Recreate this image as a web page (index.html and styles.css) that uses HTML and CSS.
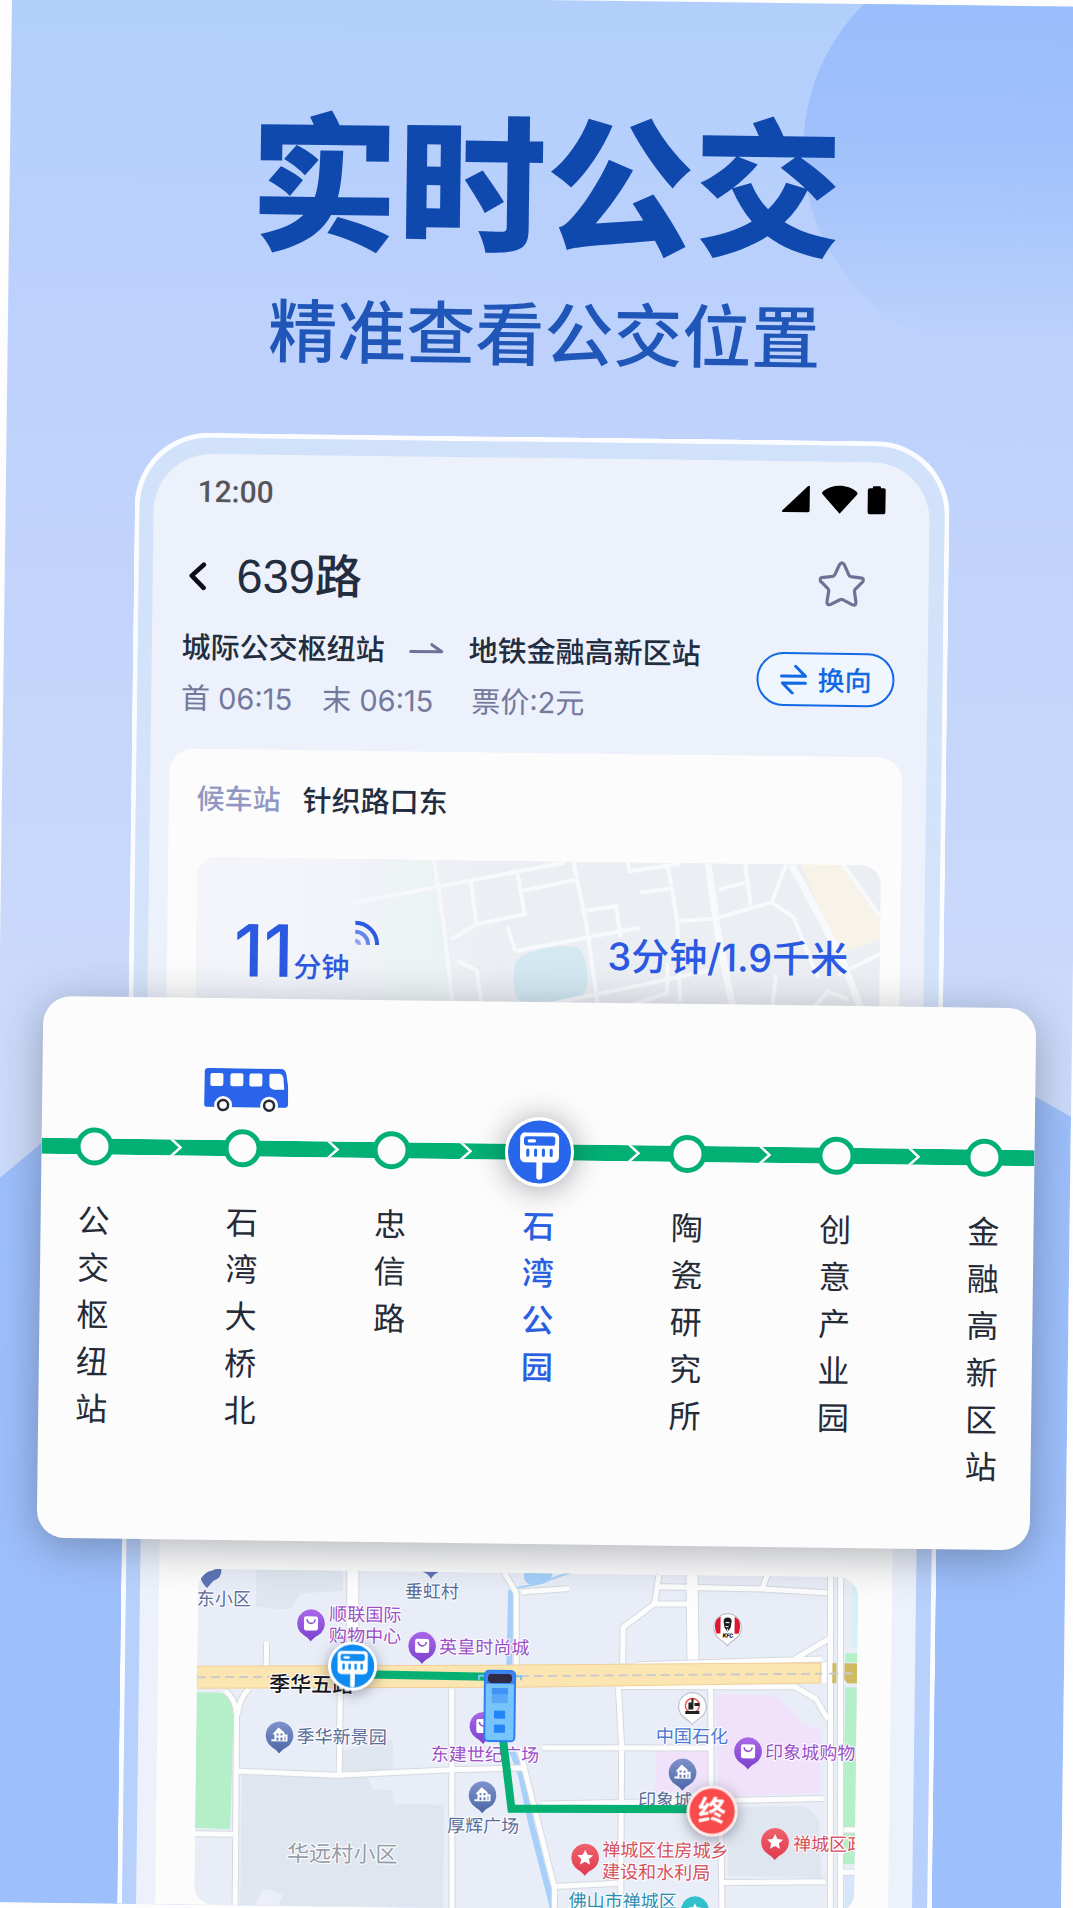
FILE: index.html
```html
<!DOCTYPE html>
<html lang="zh-CN">
<head>
<meta charset="utf-8">
<meta name="viewport" content="width=device-width, initial-scale=1">
<title>实时公交</title>
<link rel="stylesheet" href="styles.css">
</head>
<body>
<!-- shared symbols -->
<svg class="defs" width="0" height="0" aria-hidden="true">
  <defs>
    <linearGradient id="gp" x1="0" y1="0" x2="0" y2="1"><stop offset="0" stop-color="#a968ea"/><stop offset="1" stop-color="#7c40cc"/></linearGradient>
    <linearGradient id="gb" x1="0" y1="0" x2="0" y2="1"><stop offset="0" stop-color="#7f93cc"/><stop offset="1" stop-color="#4b66a6"/></linearGradient>
    <linearGradient id="gr" x1="0" y1="0" x2="0" y2="1"><stop offset="0" stop-color="#f0616e"/><stop offset="1" stop-color="#e03a4e"/></linearGradient>
    <path id="drop" d="M0-14a14 14 0 0 1 7 26C3 14 1 17 0 18C-1 17-3 14-7 12A14 14 0 0 1 0-14z"/>
    <g id="pin-shop">
      <use href="#drop" fill="url(#gp)"/>
      <rect x="-7" y="-7" width="14" height="14" rx="2" fill="#fff"/>
      <path d="M-4-4a4 4 0 0 0 8 0" fill="none" stroke="#8b4fd6" stroke-width="1.6"/>
    </g>
    <g id="pin-home">
      <use href="#drop" fill="url(#gb)"/>
      <path d="M-7-1L-1-8L5-3V-1H8V6H-8V4H-5V-1z" fill="#fff"/>
      <path d="M-3-2h2v2h-2zM1-2h2v2h-2zM-3 2h2v3h-2zM1 2h2v3h-2zM5 1h1v4h-1z" fill="#657ab5"/>
    </g>
    <g id="pin-gov">
      <use href="#drop" fill="url(#gr)"/>
      <path d="M0-8l2.4 5 5.6.6-4.200 3.700 1.200 5.500-5-2.800-5 2.800 1.200-5.500-4.200-3.700 5.600-.6z" fill="#fff"/>
    </g>
    <g id="stop-sign">
      <rect x="-15" y="-15" width="30" height="23" rx="4" fill="#fff"/>
      <rect x="-12" y="-12" width="24" height="7" rx="2" fill="currentColor"/>
      <path d="M-8-8.500h4" stroke="#fff" stroke-width="2.500" stroke-linecap="round"/>
      <path d="M-9-1.500v4M-3-1.500v4M3-1.500v4M9-1.500v4" stroke="currentColor" stroke-width="2.400" stroke-linecap="round"/>
      <path d="M0 8v11" stroke="#fff" stroke-width="4.600" stroke-linecap="round"/>
    </g>
  </defs>
</svg>

<main class="poster">
  <div class="sun"></div>
  <div class="hill"></div>

  <header class="hero">
    <h1 class="hero-title">实时公交</h1>
    <p class="hero-sub">精准查看公交位置</p>
  </header>

  <div class="stage">
    <section class="phone">
      <div class="screen">
        <div class="status">
          <span>12:00</span>
          <svg class="status-icons" width="104" height="30" viewBox="0 0 104 30" aria-hidden="true">
            <path d="M28 2v24a2 2 0 0 1-2 2H2c-2 0-2-1-1-2L26 2c1-1 2-1 2 0z"/>
            <path d="M58 29L41 10c-1-1-1-2 0-3c9-8 25-8 34 0c1 1 1 2 0 3z"/>
            <path d="M86 5a2 2 0 0 1 2-2h3V2a1 1 0 0 1 1-1h6a1 1 0 0 1 1 1v1h3a2 2 0 0 1 2 2v22a2 2 0 0 1-2 2H88a2 2 0 0 1-2-2z"/>
          </svg>
        </div>

        <div class="titlebar">
          <button class="icon-btn" type="button" aria-label="返回">
            <svg width="18" height="30" viewBox="0 0 18 30"><path d="M15 4L3 15l12 12" fill="none" stroke="#0b0d14" stroke-width="4.600" stroke-linecap="round" stroke-linejoin="round"/></svg>
          </button>
          <h2 class="route">639路</h2>
          <button class="icon-btn star" type="button" aria-label="收藏">
            <svg width="46" height="46" viewBox="0 0 46 46"><path d="M20.500 4q2.500-4 5 0l4.500 10q.6 1.500 2 1.700l11 1.300q3 1 1.200 3.600l-7.500 7.500q-1 1-.8 2.400l1.600 11q0 3.500-3.400 2.400l-9.500-4.900q-1.600-.7-3.200 0l-9.500 4.900q-3.400 1.100-3.400-2.400l1.600-11q.2-1.400-.8-2.400l-7.500-7.500Q0 18 3 17l11-1.300q1.400-.2 2-1.700z" fill="none" stroke="#6e7396" stroke-width="3.200" stroke-linejoin="round"/></svg>
          </button>
        </div>

        <div class="info">
          <div>
            <div class="ends">
              <span>城际公交枢纽站</span>
              <svg width="36" height="14" viewBox="0 0 36 14" aria-hidden="true"><path d="M2 11h31L23 4" fill="none" stroke="#6e7396" stroke-width="3" stroke-linecap="round" stroke-linejoin="round"/></svg>
              <span>地铁金融高新区站</span>
            </div>
            <div class="times"><span>首 06:15</span><span>末 06:15</span><span class="fare">票价:2元</span></div>
          </div>
          <button class="swap" type="button">
            <svg width="28" height="30" viewBox="0 0 28 30" aria-hidden="true"><path d="M2 12h24L16 2M26 19H3l10 10" fill="none" stroke="#1269e4" stroke-width="3" stroke-linecap="round" stroke-linejoin="round"/></svg>
            换向
          </button>
        </div>

        <div class="card">
          <div class="wait"><span class="wait-label">候车站</span><span>针织路口东</span></div>

          <div class="arrival">
            <svg class="arrival-map" viewBox="0 0 682 240" preserveAspectRatio="xMidYMin slice" aria-hidden="true">
              <defs>
                <linearGradient id="fade" x1="0" x2="1"><stop offset=".12" stop-color="#f3f5fb"/><stop offset=".45" stop-color="#f3f5fb" stop-opacity="0"/></linearGradient>
              </defs>
              <rect width="682" height="240" fill="#ebeef3"/>
              <path d="M190 0h45l22 150h-80z" fill="#e8f2ef"/>
              <path d="M601 0h42l39 56v18l-42 15z" fill="#f7f3e8"/>
              <path d="M318 103c4-13 40-20 60-18c10 3 14 25 12 39c-2 10-12 16-28 16h-38c-8-4-8-27-6-37z" fill="#d3e8f1"/>
              <g fill="none" stroke="#f8f9fc" stroke-width="4">
                <path d="M236 0l10 61 11 90M152 45L367 1M319 12l8 41-48 11-25 15M273 22l6 42M375 1l13 58 14 90M324 30l54-12M388 49l30-5 5 31M319 90l123-25M429 0l2 9 51-8M442 30l29-4M469 3l10 55 4 80M480 58l37-3 56-17 22 15 25 60M520 26l26-7M546 0l6 41M587 0l-14 38M290 150l60-7 162-36M310 66l8 24M644 0l38 52M260 100l20 10 6 40M412 150l58-20v-30M574 150l4-40M610 150l20-24 20 8M640 110l42-22"/>
                <path d="M509 0l11 71 16 75M592 0l50 90 24 60" stroke-width="7"/>
              </g>
              <rect width="682" height="240" fill="url(#fade)"/>
            </svg>
            <div class="arrival-text">
              <p class="eta"><strong>11</strong><span>分钟</span>
                <svg width="26" height="28" viewBox="0 0 26 28" aria-hidden="true"><g fill="none" stroke="#2b59e2" stroke-width="4"><path d="M1 3a22 22 0 0 1 22 22"/><path d="M1 12a13 13 0 0 1 13 13" opacity=".7"/><path d="M1 21a4 4 0 0 1 4 4" opacity=".5"/></g></svg>
              </p>
              <p class="dist">3分钟/1.9千米</p>
            </div>
          </div>

          <svg class="map" viewBox="0 0 658 335" role="img" aria-label="线路地图">
            <rect width="658" height="335" fill="#e9edf7"/>
            <!-- blocks -->
            <g fill="#dfe6ef">
              <path d="M58 0h86v20l-42 3-10 16H79l-21-2z"/>
              <path d="M46 204l125 2 6 12h18l3 14h50v103H46z"/>
              <path d="M146 180l35-10 15-2v31h-50z"/>
              <path d="M528 231l77-2q16 5 17 21l3 50-93-1z"/>
            </g>
            <path d="M68 319l6-1 14 6-4 11H60z" fill="#eceff7"/>
            <path d="M517 118l61 1 26 28 18 6v62l-101 6zM458 175h52v40l-52 2z" fill="#f0e2fa"/>
            <path d="M0 123h22q15 3 15 22l-2 114-35-1zM646 76h12v9h-12zM646 110h12v176h-12z" fill="#b4efc8"/>
            <path d="M652 5h6v65h-6z" fill="#d6f0f6"/>
            <path d="M648 296h10v39h-10z" fill="#d5e6f8"/>
            <!-- water -->
            <g fill="none" stroke="#a6d0fa" stroke-width="6">
              <path d="M312 17l-1 76M314 175l10 26 11 49 23 85"/>
              <path d="M318 15l20-4 32-12" stroke-width="2"/>
            </g>
            <path d="M325 0h28q-2 10-12 11h-12q-6-4-4-11z" fill="#a6d0fa"/>
            <!-- minor roads -->
            <g id="roads" fill="none" stroke-linejoin="round">
              <g stroke="#d5d9e0" stroke-width="7">
                <path d="M28 121q11 8 12 24l1 190M52 119q-10 10-11 26M39 201l102 3 115-7 74-3M143 118v86M254 116l3 219M69 72v24M0 264h38M305 0l12 20 1 72M322 19l48-4M322 174l37 140v21M424 89V53l31-24h34M459 0l-4 29M459 12l103 1 5-14M562 13l65 3M630 0l4 335M640 0l4 335M438 90l185-8M596 82l36-22M423 112l173-2 21 12 12 20M420 112l4 60 1 163M345 174l169-2M512 113l2 120M345 230l281-9M524 258l2 77M359 312l63-4M526 306l103-2M646 252h12M646 294h12"/>
              </g>
              <path d="M154 0l1 96M492 0l2 84" stroke="#d5d9e0" stroke-width="13"/>
              <g stroke="#fdfdfd" stroke-width="5">
                <path d="M28 121q11 8 12 24l1 190M52 119q-10 10-11 26M39 201l102 3 115-7 74-3M143 118v86M254 116l3 219M69 72v24M0 264h38M305 0l12 20 1 72M322 19l48-4M322 174l37 140v21M424 89V53l31-24h34M459 0l-4 29M459 12l103 1 5-14M562 13l65 3M630 0l4 335M640 0l4 335M438 90l185-8M596 82l36-22M423 112l173-2 21 12 12 20M420 112l4 60 1 163M345 174l169-2M512 113l2 120M345 230l281-9M524 258l2 77M359 312l63-4M526 306l103-2M646 252h12M646 294h12"/>
              </g>
              <path d="M154 0l1 96M492 0l2 84" stroke="#fdfdfd" stroke-width="11"/>
            </g>
            <!-- main road -->
            <path d="M0 97L316 92 621 86v20L316 114 0 119z" fill="#fbe5b0" stroke="#f3cf94" stroke-width="1"/>
            <path d="M633 86h4v20h-4zM645 86h13v20h-10l-3-4z" fill="#cdba62"/>
            <path d="M0 108L316 103 658 96" fill="none" stroke="#cbcbcb" stroke-width="2" stroke-dasharray="9 5"/>
            <path d="M625 86v20" stroke="#fff" stroke-width="4"/>

            <!-- places -->
            <g class="place">
              <g class="blue">
                <path d="M2 8q4-6 11-6l4-2h6q1 9-8 12l-6 7q-5-4-7-11z" fill="#5c74b4"/>
                <path d="M223 0h17q-5 2-8 7q-3-5-9-7z" fill="#5c74b4"/>
                <text x="-1" y="36">东小区</text>
                <text x="206" y="26">垂虹村</text>
                <use href="#pin-home" x="83" y="165"/><text x="100" y="172">季华新景园</text>
                <use href="#pin-home" x="286" y="222"/><text x="251" y="259">厚辉广场</text>
                <use href="#pin-home" x="485" y="197"/><text x="441" y="231">印象城</text>
              </g>
              <g class="purple">
                <use href="#pin-shop" x="113" y="53"/><text x="131" y="50">顺联国际</text><text x="131" y="71">购物中心</text>
                <use href="#pin-shop" x="224" y="74"/><text x="241" y="81">英皇时尚城</text>
                <use href="#pin-shop" x="286" y="153"/><text x="234" y="188">东建世纪广场</text>
                <use href="#pin-shop" x="550" y="175"/><text x="567" y="182">印象城购物</text>
              </g>
              <g class="red">
                <use href="#pin-gov" x="389" y="283"/><text x="406" y="281">禅城区住房城乡</text><text x="406" y="303">建设和水利局</text>
                <use href="#pin-gov" x="578" y="265"/><text x="596" y="273">禅城区政</text>
              </g>
              <g class="teal"><use href="#drop" x="499" y="334" fill="#2fc0cc"/><path d="M499 327l2 4h4v4h-12v-4h4z" fill="#fff"/><text x="373" y="332">佛山市禅城区</text></g>
              <text class="village" x="92" y="290">华远村小区</text>
              <text class="road-name" x="72" y="121">季华五路</text>
              <g transform="translate(528 52)">
                <use href="#drop" fill="#fff" stroke="#b5b9c4"/>
                <path d="M-7-11v17h-4q-3-8 0-14zM7-11v17h4q3-8 0-14z" fill="#dc1730"/>
                <path d="M-4-6q0-4 4-4t4 4l-1 6-3 4-3-4z" fill="#1c1c1c"/><path d="M-2-5h4M-2-1h3M0 1v2" stroke="#fff"/>
                <text class="tiny" x="-5" y="10">KFC</text>
              </g>
              <g transform="translate(494 131)">
                <use href="#drop" fill="#fff" stroke="#b5b9c4"/>
                <circle cy="-1" r="7" fill="none" stroke="#e6544f" stroke-width="1.500"/>
                <path d="M-4 3v-7h3v-4h2V3z" fill="#222"/><path d="M2-2h5M-7 6H7" stroke="#222" stroke-width="3"/>
              </g>
              <text class="oil" x="458" y="167">中国石化</text>
            </g>

            <!-- route -->
            <path d="M155 103L302 104 306 168 315 235 515 233" fill="none" stroke="#06b073" stroke-width="8"/>
            <g transform="translate(286 97)">
              <path d="M0 6h-5v4M32 6h5v4" fill="none" stroke="#79c4f7" stroke-width="2"/>
              <rect x="1" y="1" width="30" height="70" rx="4" fill="#77c4fa" stroke="#2e7ff0" stroke-width="2"/>
              <path d="M2 2h28v12H2z" fill="#3d84f0"/>
              <rect x="4" y="4" width="24" height="9" rx="4" fill="#2f2a45"/>
              <path d="M8 18h16v15H8z" fill="#5aa9f8"/><path d="M8 18h16v6H8z" fill="#3f93f6"/>
              <path d="M11 41h10v7H11zM11 55h10v7H11z" fill="#2384f6" stroke="#2384f6" stroke-linejoin="round"/>
            </g>
            <g class="marker stop-marker">
              <circle cx="155" cy="95" r="23" fill="#0d8bf0" stroke="#fff" stroke-width="3"/>
              <use href="#stop-sign" x="155" y="95"/>
            </g>
            <g class="marker">
              <circle cx="515" cy="235" r="24" fill="#f94b4b" stroke="#fdeaea" stroke-width="3"/>
              <text class="end" x="515" y="245">终</text>
            </g>
          </svg>
        </div>
      </div>
    </section>

    <section class="line">
      <svg class="bus" width="84" height="44" viewBox="0 0 84 44" role="img" aria-label="公交车">
        <path d="M4 0h72q5 0 6 6l2 13v16q0 4-4 4H3q-3 0-3-3V4q0-4 4-4z" fill="#2964ea"/>
        <g fill="#fcfcfc"><rect x="6" y="5" width="13" height="13" rx="2"/><rect x="26" y="5" width="13" height="13" rx="2"/><rect x="45" y="5" width="13" height="13" rx="2"/><path d="M66 5h8q4 0 5 4l1 12H70q-5-1-5-5V6z"/><circle cx="19" cy="37" r="9"/><circle cx="65" cy="37" r="9"/></g>
        <g fill="#fcfcfc" stroke="#262a35" stroke-width="2.500"><circle cx="19" cy="37" r="5"/><circle cx="65" cy="37" r="5"/></g>
      </svg>
      <div class="rail">
        <svg class="track" viewBox="0 0 993 16" preserveAspectRatio="none" aria-hidden="true">
          <path d="M0 0h993v16H0z" fill="#02b073"/>
          <path d="M129 -1l10 9-10 9M286-1l10 9-10 9M419-1l10 9-10 9M587-1l10 9-10 9M718-1l10 9-10 9M867-1l10 9-10 9" fill="none" stroke="#fff" stroke-width="2.500"/>
        </svg>
        <ol class="stops">
          <li><i class="dot"></i><span>公交枢纽站</span></li>
          <li><i class="dot"></i><span>石湾大桥北</span></li>
          <li><i class="dot"></i><span>忠信路</span></li>
          <li class="current"><svg class="here" width="70" height="70" viewBox="-35 -35 70 70" aria-hidden="true"><circle r="33" fill="#2866ec" stroke="#fff" stroke-width="3"/><g transform="scale(1.300)"><use href="#stop-sign"/></g></svg><span>石湾公园</span></li>
          <li><i class="dot"></i><span>陶瓷研究所</span></li>
          <li><i class="dot"></i><span>创意产业园</span></li>
          <li><i class="dot"></i><span>金融高新区站</span></li>
        </ol>
      </div>
    </section>
  </div>
</main>
</body>
</html>
```
FILE: styles.css
```css
* { box-sizing: border-box; }

body {
  margin: 0;
  background: #fdfdfd;
  font-family: "Noto Sans CJK SC", sans-serif;
  color: #232d40;
  overflow: hidden;
}

h1, h2, p, ol { margin: 0; padding: 0; font-weight: inherit; }
svg { display: block; }
.defs { position: absolute; }

/* The whole poster leans slightly clockwise */
.poster {
  position: relative;
  min-height: 100vh;
  overflow: hidden;
  background: linear-gradient(#b2cffc 0, #bad0fc 240px, #bfd2fc 420px, #cddbfa 1100px);
  transform: rotate(0.72deg);
}

.sun {
  position: absolute;
  top: -61px;
  right: -130px;
  width: 410px;
  height: 410px;
  border-radius: 50%;
  background: linear-gradient(#9abdfb 15%, #9fc0fb 45%, rgba(170, 200, 252, 0) 96%);
}

.hill {
  position: absolute;
  top: 1040px;
  right: 0;
  bottom: 0;
  left: 0;
  background: #9dbffb;
  clip-path: polygon(0 147px, 13% 27px, 88% 0, 100% 70px, 100% 100%, 0 100%);
}

.hero {
  position: relative;
  padding-top: 98px;
  text-align: center;
}

.hero-title {
  font-size: 148px;
  line-height: 160px;
  font-weight: 900;
  color: #0f49ae;
}

.hero-sub {
  margin-top: 22px;
  font-size: 69px;
  line-height: 100px;
  font-weight: 500;
  color: #1f56b8;
}

.stage {
  position: relative;
  display: grid;
  margin-top: 57px;
}

.phone, .line { grid-area: 1 / 1; }

.phone {
  width: 76%;
  margin: 0 auto;
  padding: 16px 15px 0 14px;
  border: 5px solid #fafcff;
  border-bottom: 0;
  border-radius: 74px 74px 0 0;
  background: linear-gradient(rgba(220, 236, 248, 0.6), rgba(220, 236, 250, 0.55) 500px, rgba(255, 255, 255, 0.28) 900px);
  background-clip: padding-box;
}

.screen {
  border-radius: 58px 58px 0 0;
  background: #edf1fb;
  padding-top: 21px;
}

.status {
  display: flex;
  align-items: center;
  justify-content: space-between;
  padding: 0 44px 0 44px;
  font: 500 30px/34px Roboto, sans-serif;
  color: #55565a;
}

.status-icons { fill: #000; }

.titlebar {
  display: flex;
  align-items: center;
  height: 48px;
  margin-top: 43px;
  padding: 0 64px 0 36px;
}

.icon-btn {
  padding: 0;
  border: 0;
  background: none;
}

.route {
  margin-left: 30px;
  font-family: "Liberation Sans", "Noto Sans CJK SC", sans-serif;
  font-size: 47px;
  line-height: 48px;
  font-weight: 500;
}

.star { margin-left: auto; }

.info {
  display: flex;
  align-items: center;
  justify-content: space-between;
  margin-top: 25px;
  padding: 0 33px 0 30px;
}

.ends {
  display: flex;
  align-items: center;
  gap: 24px;
  font-size: 29px;
  line-height: 40px;
  font-weight: 500;
}

.times {
  display: flex;
  gap: 30px;
  margin-top: 14px;
  font-family: Inter, "Noto Sans CJK SC", sans-serif;
  font-size: 29px;
  line-height: 40px;
  color: #74799c;
}

.fare { margin-left: 8px; }

.swap {
  display: flex;
  align-items: center;
  justify-content: center;
  gap: 10px;
  width: 138px;
  height: 54px;
  padding: 0;
  border: 2px solid #1269e4;
  border-radius: 27px;
  background: #f0f6fe;
  color: #1269e4;
  font: 500 27px/50px "Noto Sans CJK SC", sans-serif;
}

.card {
  margin: 30px 24px 0 19px;
  padding: 28px 34px 0 28px;
  border-radius: 24px 24px 0 0;
  background: #fcfcfc;
}

.wait {
  display: flex;
  gap: 22px;
  font-size: 29px;
  line-height: 40px;
  font-weight: 500;
}

.wait-label { color: #8f97c2; font-size: 28px; }

.arrival {
  display: grid;
  height: 240px;
  margin: 40px -14px 0 1px;
  border-radius: 20px;
  overflow: hidden;
}

.arrival-map, .arrival-text { grid-area: 1 / 1; }
.arrival-map { width: 100%; height: 100%; }

.arrival-text {
  display: flex;
  justify-content: space-between;
  align-items: flex-start;
  padding: 57px 32px 0 38px;
  font-family: Inter, "Noto Sans CJK SC", sans-serif;
  color: #2b59e2;
}

.eta {
  display: flex;
  align-items: baseline;
  font-size: 28px;
  line-height: 72px;
  font-weight: 500;
}

.eta strong { font-size: 72px; font-weight: 500; }
.eta svg { align-self: flex-start; margin: 4px 0 0 4px; }

.dist {
  margin-top: 13px;
  font-size: 38px;
  line-height: 48px;
  font-weight: 500;
}

.map {
  width: calc(100% - 11px);
  height: auto;
  margin: 472px 0 0 11px;
  border-radius: 20px;
  overflow: hidden;
}

.place text {
  font-size: 18px;
  paint-order: stroke;
  stroke: #fff;
  stroke-width: 2px;
  stroke-linejoin: round;
}

.blue text { fill: #5a6c9a; }
.purple text { fill: #9a4fc6; }
.red text { fill: #d4505f; }
.teal text { fill: #2b8fb3; }
.place .oil { fill: #4a78d0; }
.place .village { font-size: 22px; fill: #949ba7; }
.place .road-name { font-size: 21px; font-weight: 500; fill: #14161c; }
.place .tiny { font: italic 900 6px Roboto, sans-serif; fill: #111; stroke: none; }
.marker { filter: drop-shadow(0 3px 7px rgba(20, 30, 60, 0.4)); }
.stop-marker { color: #0d8bf0; }
.end { font-size: 28px; font-weight: 700; fill: #fff; text-anchor: middle; }

.line {
  align-self: start;
  height: 542px;
  margin: 565px 36px 0 44px;
  padding-top: 70px;
  border-radius: 28px;
  background: #fcfcfc;
  box-shadow: 0 8px 44px rgba(30, 35, 50, 0.34);
}

.bus { margin-left: 162px; }
.rail { display: grid; margin-top: 9px; }
.track, .stops { grid-area: 1 / 1; }
.track { width: 100%; height: 16px; margin-top: 19px; }

.stops {
  display: flex;
  justify-content: space-between;
  padding: 0 34px 0 37px;
  list-style: none;
  font-size: 32px;
  line-height: 47px;
  color: #252a37;
}

.stops li {
  display: flex;
  flex-direction: column;
  align-items: center;
  width: 32px;
}

.stops span { margin-top: 30px; width: 32px; word-break: break-all; }

.dot {
  flex: none;
  width: 38px;
  height: 38px;
  margin-top: 8px;
  border: 5px solid #02b073;
  border-radius: 50%;
  background: #fcfcfc;
}

.here {
  flex: none;
  margin: -8px 0 -16px;
  border-radius: 50%;
  color: #2866ec;
  box-shadow: 0 2px 30px rgba(30, 35, 50, 0.4);
}

.current { color: #2a5fe0; font-weight: 500; }
```
